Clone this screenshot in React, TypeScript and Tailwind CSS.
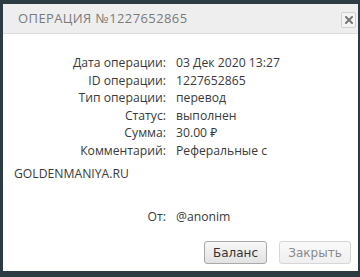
import React from "react";

const rows: [string, string][] = [
  ["Дата операции:", "03 Дек 2020 13:27"],
  ["ID операции:", "1227652865"],
  ["Тип операции:", "перевод"],
  ["Статус:", "выполнен"],
  ["Сумма:", "30.00 ₽"],
];

export default function App() {
  return (
    <div className="w-[360px] h-[277px] bg-[#2d3b42] pt-[4px] pl-[3px] pr-[2px] overflow-hidden">
      <div className="w-[355px] h-[267px] bg-white flex flex-col" style={{ fontFamily: '"Open Sans", "Noto Sans", sans-serif' }}>
        <div className="h-[30px] bg-[#eeeeee] border-b border-[#dddddd] flex items-center pl-[15px] pr-[2px] justify-between">
          <div className="text-[13px] tracking-[0.4px] text-[#7a7a7a] leading-none">ОПЕРАЦИЯ №1227652865</div>
          <div className="w-[15px] h-[16px] border border-[#d0d0d0] rounded-[2px] bg-[#f3f3f3] flex items-center justify-center mt-[2px]">
            <svg width="8" height="8" viewBox="0 0 8 8">
              <path d="M1 1 L7 7 M7 1 L1 7" stroke="#777" strokeWidth="2" strokeLinecap="square" />
            </svg>
          </div>
        </div>
        <div className="pt-[20px] text-[12.2px] text-[#3a3a3a]">
          {rows.map(([l, v]) => (
            <div key={l} className="flex leading-[17.5px]">
              <div className="w-[163px] text-right">{l}</div>
              <div className="pl-[10px]">{v}</div>
            </div>
          ))}
          <div className="flex leading-[17.5px]">
            <div className="w-[163px] text-right">Комментарий:</div>
            <div className="pl-[10px]">Реферальные с</div>
          </div>
          <div className="pl-[11px] mt-[6px] leading-[17.5px]">GOLDENMANIYA.RU</div>
          <div className="flex leading-[17.5px] mt-[25px]">
            <div className="w-[163px] text-right">От:</div>
            <div className="pl-[10px]">@anonim</div>
          </div>
        </div>
        <div className="flex justify-end gap-[12px] pr-[7px] mt-[16px]" style={{ fontFamily: '"DejaVu Sans", Verdana, sans-serif' }}>
          <button className="w-[63px] h-[23px] rounded-[3px] border border-[#a9a9a9] bg-gradient-to-b from-[#f8f8f8] to-[#e2e2e2] text-[12px] text-[#333]">Баланс</button>
          <button className="w-[72px] h-[23px] rounded-[3px] border border-[#d6d6d6] bg-gradient-to-b from-[#fafafa] to-[#efefef] text-[12px] text-[#8a8a8a]">Закрыть</button>
        </div>
      </div>
    </div>
  );
}
